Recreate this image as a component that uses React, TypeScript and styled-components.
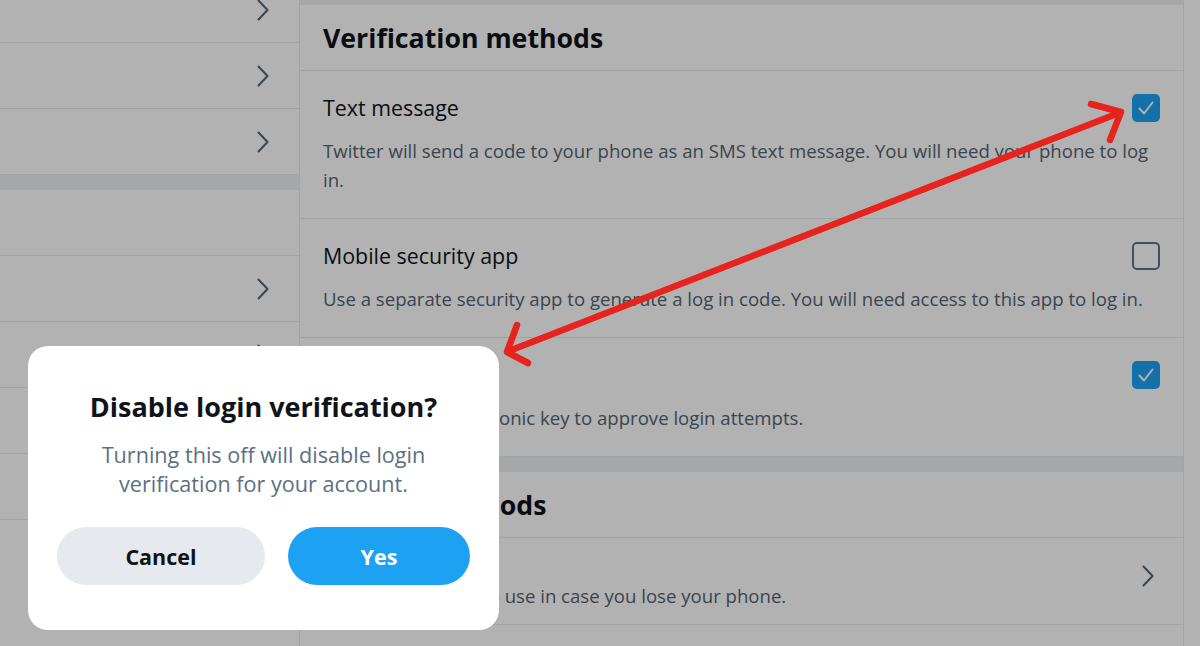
import React from "react";
import styled, { createGlobalStyle } from "styled-components";

const GlobalStyle = createGlobalStyle`
  html, body { margin: 0; padding: 0; background: #ffffff; }
  body { font-family: "Open Sans", "Noto Sans", sans-serif; color: #0f1419; }
  * { box-sizing: border-box; }
`;

const Page = styled.div`
  position: relative;
  width: 1200px;
  height: 646px;
  overflow: hidden;
  display: flex;
  background: #ffffff;
`;

const LeftColumn = styled.div`
  width: 300px;
  flex: none;
  border-right: 1px solid #e6ecf0;
`;

const LeftInner = styled.div`
  margin-top: -23px;
  display: flex;
  flex-direction: column;
`;

const NavRow = styled.div`
  height: 66px;
  border-bottom: 1px solid #e6ecf0;
  display: flex;
  align-items: center;
  justify-content: flex-end;
  padding-right: 30px;
`;

const Band = styled.div<{ $h: number }>`
  height: ${(p) => p.$h}px;
  background: #eceff1;
  flex: none;
`;

const MainColumn = styled.div`
  width: 884px;
  flex: none;
  border-right: 1px solid #e6ecf0;
  display: flex;
  flex-direction: column;
`;

const SectionHeader = styled.h2`
  margin: 0;
  height: 66px;
  flex: none;
  border-bottom: 1px solid #e6ecf0;
  display: flex;
  align-items: center;
  padding: 0 23px;
  font-size: 26.7px;
  font-weight: 700;
  color: #0f1419;
`;

const OptionRow = styled.div<{ $compact?: boolean }>`
  flex: none;
  border-bottom: 1px solid #e6ecf0;
  padding: ${(p) => (p.$compact ? "3px 23px 14px" : "25px 23px 24px")};
  display: flex;
  align-items: center;
  gap: 16px;
`;

const OptionBody = styled.div`
  flex: 1;
  min-width: 0;
  display: flex;
  flex-direction: column;
  gap: 16px;
`;

const TitleLine = styled.div`
  display: flex;
  align-items: center;
  justify-content: space-between;
  height: 24px;
`;

const OptionTitle = styled.div`
  font-size: 21.4px;
  line-height: 24px;
  color: #0f1419;
`;

const OptionDesc = styled.div`
  font-size: 18.6px;
  line-height: 29px;
  color: #536471;
`;

const ChevronSlot = styled.div`
  flex: none;
  display: flex;
  align-items: center;
  padding-right: 6px;
`;

const Box = styled.div<{ $checked: boolean }>`
  width: 28px;
  height: 28px;
  flex: none;
  border-radius: 5px;
  display: flex;
  align-items: center;
  justify-content: center;
  background: ${(p) => (p.$checked ? "#1da1f2" : "transparent")};
  border: ${(p) => (p.$checked ? "none" : "2.5px solid #627281")};
`;

const RightRail = styled.div`
  flex: 1;
`;

const Backdrop = styled.div`
  position: absolute;
  inset: 0;
  background: rgba(0, 0, 0, 0.3);
`;

const Dialog = styled.div`
  position: absolute;
  left: 28px;
  top: 346px;
  width: 471px;
  height: 284px;
  background: #ffffff;
  border-radius: 20px;
  padding: 45px 29px 0;
  display: flex;
  flex-direction: column;
  align-items: center;
`;

const DialogTitle = styled.h1`
  margin: 0;
  font-size: 27px;
  line-height: 32px;
  font-weight: 700;
  color: #0f1419;
  text-align: center;
  white-space: nowrap;
`;

const DialogText = styled.p`
  margin: 17px 0 0;
  max-width: 360px;
  font-size: 21.6px;
  line-height: 29px;
  color: #5b7083;
  text-align: center;
`;

const ButtonRow = styled.div`
  margin-top: 29px;
  display: flex;
  gap: 23px;
  width: 100%;
`;

const Button = styled.button<{ $primary?: boolean; $w: number }>`
  width: ${(p) => p.$w}px;
  height: 58px;
  border: none;
  border-radius: 29px;
  font-family: inherit;
  font-size: 21.5px;
  font-weight: 700;
  background: ${(p) => (p.$primary ? "#1da1f2" : "#e6e9ed")};
  color: ${(p) => (p.$primary ? "#ffffff" : "#0f1419")};
  cursor: pointer;
`;

const Annotation = styled.svg`
  position: absolute;
  left: 0;
  top: 0;
  pointer-events: none;
`;

const Chevron = () => (
  <svg width="12" height="22" viewBox="0 0 12 22" fill="none">
    <path d="M1.5 1.5 L10.5 11 L1.5 20.5" stroke="#536471" strokeWidth="2" strokeLinecap="round" strokeLinejoin="round" />
  </svg>
);

const Checkbox = ({ checked }: { checked: boolean }) => (
  <Box $checked={checked}>
    {checked && (
      <svg width="28" height="28" viewBox="0 0 28 28" fill="none">
        <path d="M7.5 14.5 L12 19.5 L20.5 8.5" stroke="#ffffff" strokeWidth="2" strokeLinecap="round" strokeLinejoin="round" />
      </svg>
    )}
  </Box>
);

const methods = [
  {
    title: "Text message",
    desc: "Twitter will send a code to your phone as an SMS text message. You will need your phone to log in.",
    checked: true,
  },
  {
    title: "Mobile security app",
    desc: "Use a separate security app to generate a log in code. You will need access to this app to log in.",
    checked: false,
  },
  {
    title: "Security key",
    desc: "Use a physical electronic key to approve login attempts.",
    checked: true,
  },
];

export default function App() {
  return (
    <>
      <GlobalStyle />
      <Page>
        <LeftColumn>
          <LeftInner>
            <NavRow><Chevron /></NavRow>
            <NavRow><Chevron /></NavRow>
            <NavRow><Chevron /></NavRow>
            <Band $h={15} />
            <NavRow />
            <NavRow><Chevron /></NavRow>
            <NavRow><Chevron /></NavRow>
            <NavRow><Chevron /></NavRow>
            <NavRow><Chevron /></NavRow>
          </LeftInner>
        </LeftColumn>
        <MainColumn>
          <Band $h={5} />
          <SectionHeader>Verification methods</SectionHeader>
          {methods.map((m) => (
            <OptionRow key={m.title}>
              <OptionBody>
                <TitleLine>
                  <OptionTitle>{m.title}</OptionTitle>
                  <Checkbox checked={m.checked} />
                </TitleLine>
                <OptionDesc>{m.desc}</OptionDesc>
              </OptionBody>
            </OptionRow>
          ))}
          <Band $h={15} />
          <SectionHeader>Backup methods</SectionHeader>
          <OptionRow $compact>
            <OptionBody>
              <TitleLine>
                <OptionTitle>Backup codes</OptionTitle>
              </TitleLine>
              <OptionDesc>Get backup codes to use in case you lose your phone.</OptionDesc>
            </OptionBody>
            <ChevronSlot>
              <Chevron />
            </ChevronSlot>
          </OptionRow>
        </MainColumn>
        <RightRail />
        <Backdrop />
        <Dialog role="dialog">
          <DialogTitle>Disable login verification?</DialogTitle>
          <DialogText>
            Turning this off will disable login verification for your account.
          </DialogText>
          <ButtonRow>
            <Button $w={208}>Cancel</Button>
            <Button $primary $w={182}>Yes</Button>
          </ButtonRow>
        </Dialog>
        <Annotation width="1200" height="646" viewBox="0 0 1200 646">
          <defs>
            <filter id="soft" x="-5%" y="-5%" width="110%" height="110%">
              <feGaussianBlur stdDeviation="0.7" />
            </filter>
          </defs>
          <g stroke="#e8201c" strokeWidth="6.5" strokeLinecap="round" strokeLinejoin="round" fill="none" filter="url(#soft)">
            <path d="M509 351 L1119 113" />
            <path d="M1091 104 L1121 112 L1110 140" />
            <path d="M517 325 L507 352 L528 363" />
          </g>
        </Annotation>
      </Page>
    </>
  );
}
